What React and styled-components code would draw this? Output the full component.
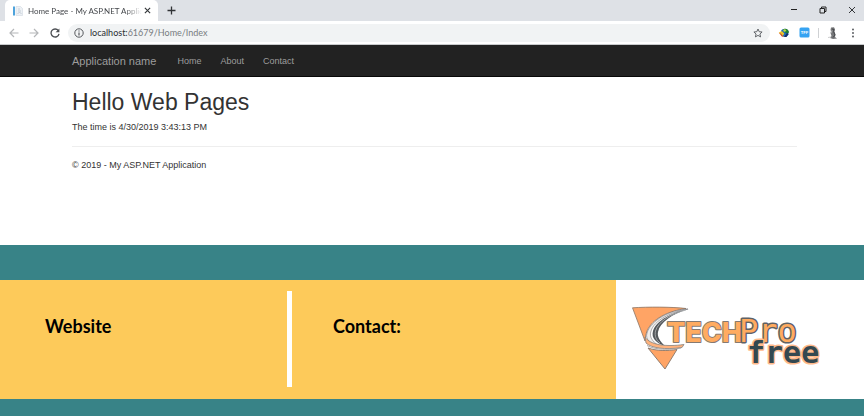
import React from 'react'
import styled, { createGlobalStyle } from 'styled-components';


export default function App() {
  return (
    <Page>
      <GlobalStyle />
      <TabStrip>
        <Tab>
          <PageIcon />
          <TabTitle>Home Page - My ASP.NET Applic</TabTitle>
          <IconButton $size={11} aria-label='Close tab'><CloseIcon size={7} /></IconButton>
        </Tab>
        <IconButton $size={26} aria-label='New tab'><PlusIcon /></IconButton>
        <WindowButtons>
          <IconButton $size={24} aria-label='Minimize'><MinimizeIcon /></IconButton>
          <IconButton $size={24} aria-label='Restore'><RestoreIcon /></IconButton>
          <IconButton $size={24} aria-label='Close'><CloseIcon size={8} thin /></IconButton>
        </WindowButtons>
      </TabStrip>

      <Toolbar>
        <IconButton $size={20} aria-label='Back'><ArrowIcon /></IconButton>
        <IconButton $size={20} aria-label='Forward'><ArrowIcon forward /></IconButton>
        <IconButton $size={22} aria-label='Reload'><ReloadIcon /></IconButton>
        <AddressBar>
          <InfoIcon />
          <Address>
            <span aria-hidden='true'><b>localhost:</b>61679/Home/Index</span>
            <input aria-label='Address' defaultValue='localhost:61679/Home/Index' />
          </Address>
          <IconButton $size={12} aria-label='Bookmark'><StarIcon /></IconButton>
        </AddressBar>
        <Extensions>
          <IconButton $size={12} aria-label='Download manager'><GlobeIcon /></IconButton>
          <IconButton $size={12} aria-label='TFF'><TffIcon /></IconButton>
          <Separator />
          <IconButton $size={12} aria-label='Profile'><ProfileIcon /></IconButton>
          <IconButton $size={12} aria-label='Menu'><MenuIcon /></IconButton>
        </Extensions>
      </Toolbar>

      <Navbar>
        <Brand href='#'>Application name</Brand>
        <NavLink href='#'>Home</NavLink>
        <NavLink href='#'>About</NavLink>
        <NavLink href='#'>Contact</NavLink>
      </Navbar>

      <Content>
        <h1>Hello Web Pages</h1>
        <p>The time is 4/30/2019 3:43:13 PM</p>
        <hr />
        <footer>© 2019 - My ASP.NET Application</footer>
      </Content>

      <Banner>
        <BannerRow>
          <BannerCell>
            <h2>Website</h2>
            <Divider />
          </BannerCell>
          <BannerCell>
            <h2>Contact:</h2>
          </BannerCell>
          <LogoCell><Logo /></LogoCell>
        </BannerRow>
      </Banner>
    </Page>
  )
}

function PageIcon() {
  return (
    <svg width='10' height='10' viewBox='0 0 10 10'>
      <path d='M0 .5h2v9H0z' fill='#4da3dc' />
      <path d='M3 .5h4.500l2 2v7H3z' fill='#edf1f5' stroke='#d2d9e0' strokeWidth='.6' />
      <path d='M5 3h2M5 5h3M4.500 8l2-2 2 2' fill='none' stroke='#b4bfca' strokeWidth='.7' />
    </svg>
  )
}

function CloseIcon({ size, thin }) {
  return (
    <svg width={size} height={size} viewBox='0 0 8 8'>
      <path d='M1 1l6 6M7 1L1 7' stroke='#34373a' strokeWidth={thin ? 1 : 1.3} />
    </svg>
  )
}

function PlusIcon() {
  return (
    <svg width='9' height='9' viewBox='0 0 9 9'>
      <path d='M4.500.5v8M.5 4.500h8' stroke='#303336' strokeWidth='1.300' />
    </svg>
  )
}

function MinimizeIcon() {
  return (
    <svg width='8' height='8' viewBox='0 0 8 8'>
      <path d='M1 3.500h6' stroke='#222' />
    </svg>
  )
}

function RestoreIcon() {
  return (
    <svg width='8' height='8' viewBox='0 0 8 8'>
      <path d='M1 2.500h4.500V7H1zM2.500 2.500V1H7v4.500H5.500' fill='none' stroke='#222' />
    </svg>
  )
}

function ArrowIcon({ forward }) {
  return (
    <svg width='10' height='10' viewBox='0 0 10 10'>
      <path
        d={forward ? 'M.5 5h8M5 1l4 4-4 4' : 'M9.500 5h-8M5 1L1 5l4 4'}
        fill='none'
        stroke='#b4b6b8'
        strokeWidth='1.200'
      />
    </svg>
  )
}

function ReloadIcon() {
  return (
    <svg width='10' height='10' viewBox='0 0 10 10'>
      <path d='M8.300 2.600A4 4 0 1 0 9 5.800' fill='none' stroke='#4b4e52' strokeWidth='1.300' />
      <path d='M9.400.4v3.800H5.600z' fill='#4b4e52' />
    </svg>
  )
}

function InfoIcon() {
  return (
    <svg width='10' height='10' viewBox='0 0 10 10'>
      <circle cx='5' cy='5' r='4.200' fill='none' stroke='#55585c' />
      <path d='M5 4.400v3M5 2.400v1.200' stroke='#55585c' strokeWidth='1.200' />
    </svg>
  )
}

function StarIcon() {
  return (
    <svg width='10' height='10' viewBox='0 0 10 10'>
      <path d='M5 1l1.200 2.700 2.900.3-2.200 2 .7 2.900L5 7.400 2.400 8.900l.7-2.900-2.200-2 2.900-.3z' fill='none' stroke='#55585c' strokeWidth='.9' />
    </svg>
  )
}

function GlobeIcon() {
  return (
    <svg width='12' height='10' viewBox='0 0 12 10'>
      <path d='M3 3C4 1 7 0 9 1.500C11 3 11 6 9 8L6 9L3 7z' fill='#1f6bb8' />
      <path d='M5 1.200C8-.3 10.800 1.500 11 4.500L8.500 5.500L6 3.500z' fill='#1d7d33' />
      <path d='M5 2l2-1 1.500 2-2.500 1z' fill='#b8d84b' />
      <path d='M.8 4.500l3-1.500 2.500 2.500-1.500 2.500z' fill='#ecc52a' />
      <path d='M.8 4.800l2 .7 3 3.500-2-.5z' fill='#d34b27' />
      <path d='M6 9l3-4 1.800 1L8.500 9z' fill='#15306a' />
    </svg>
  )
}

function TffIcon() {
  return (
    <svg width='11' height='11' viewBox='0 0 11 11'>
      <rect x='.5' y='.5' width='10' height='10' rx='1.500' fill='#36a3f2' />
      <text x='5.500' y='7' textAnchor='middle' fontFamily='Liberation Sans, sans-serif' fontWeight='700' fontSize='4' fill='#fff'>TFF</text>
    </svg>
  )
}

function ProfileIcon() {
  return (
    <svg width='12' height='12' viewBox='0 0 12 12'>
      <path d='M4 .5l3-.3 1 2-.5 2.300 1 3-.5 2.500 2 1.500-4 .5-3-1 1.500-2-1-3 .5-2-.5-1z' fill='#77787a' />
      <path d='M5 2l2 .5-.5 2L8 8 6 10.500' fill='none' stroke='#45474a' />
      <path d='M1 10.500l3-.5M5 3.500l-1 2.500' stroke='#bfc0c1' strokeWidth='.8' />
    </svg>
  )
}

function MenuIcon() {
  return (
    <svg width='4' height='10' viewBox='0 0 4 10'>
      <circle cx='2' cy='1.500' r='.9' fill='#4b4e52' />
      <circle cx='2' cy='5' r='.9' fill='#4b4e52' />
      <circle cx='2' cy='8.500' r='.9' fill='#4b4e52' />
    </svg>
  )
}

function Logo() {
  return (
    <svg width='200' height='75' viewBox='0 0 200 75' role='img' aria-label='TECHPro free'>
      {/* shield */}
      <path d='M2.500 7.800C18 6.800 42 6.800 56 8.500C38 11 22 19 17 31C16 34 15 38 15 41Z' fill='#ffa465' stroke='#8a7565' strokeWidth='.8' />
      <path d='M18 48C27 51 37 51 47 49.500L35 69Z' fill='#ffa465' stroke='#85756a' strokeWidth='.9' />
      {/* road */}
      <path d='M58 9C40 10 21 20 17 33C15 39 20 44 29 46C22 41 19 37 21 31C24 21 40 12 58 9Z' fill='#efedeb' stroke='#77757a' strokeWidth='.6' />
      <path d='M59 9C42 12 26 21 23 31C21 38 26 43 35 46C30 41 27 37 28 32C30 22 42 14 59 9Z' fill='#54585c' />
      <path d='M56 10C40 14 28 22 25.500 31C24.500 36 26 40 30 43' fill='none' stroke='#b5b7b9' strokeWidth='.8' />
      {/* band under the shield */}
      <path d='M15 37C20 45 36 47 54 44.500L52 47.500C35 50 21 48 16 43Z' fill='#ffb27c' stroke='#85817d' strokeWidth='.8' />
      <path d='M17 45.500C25 50 39 50 51 48' fill='none' stroke='#9a9693' strokeWidth='.8' />

      <LogoWord x='37' y='42' $family='Inter' $size={27} $fill='#ffab60' $stroke='#857a72' $weight={800}>TECH</LogoWord>
      <LogoWord x='109' y='42' $family='DejaVu Sans Mono' $size={32} $fill='#ffab60' $stroke='#5f6266' $weight={400} $line={3}>Pro</LogoWord>
      <LogoWord x='117' y='63' $family='DejaVu Sans Mono' $size={30} $fill='#344850' $stroke='#ffb98a' $line={3}>free</LogoWord>
    </svg>
  )
}

const GlobalStyle = createGlobalStyle`
  *{
    box-sizing: border-box;
  }
  body{
    margin: 0;
    background: #388387;
    font-family: 'Liberation Sans', Arial, sans-serif;
  }
`

const Page = styled.div`
  display: flex;
  flex-direction: column;
  min-height: 100vh;
`

const IconButton = styled.button`
  display: flex;
  align-items: center;
  justify-content: center;
  flex: none;
  width: ${({ $size }) => $size}px;
  height: 20px;
  padding: 0;
  border: 0;
  background: none;
`

const TabStrip = styled.header`
  display: flex;
  height: 21px;
  padding-left: 5px;
  background: #dee1e6;
`

const Tab = styled.div`
  display: flex;
  align-items: center;
  width: 153px;
  padding: 0 5px 0 8px;
  border-radius: 5px 5px 0 0;
  background: #fff;
`

const TabTitle = styled.span`
  flex: 1;
  min-width: 0;
  margin-left: 5px;
  overflow: hidden;
  white-space: nowrap;
  font: 8px/20px Lato, sans-serif;
  color: #45484c;
  mask-image: linear-gradient(to right, #000 85%, transparent);
`

const WindowButtons = styled.div`
  display: flex;
  gap: 5px;
  margin-left: auto;
`

const Toolbar = styled.div`
  display: flex;
  align-items: center;
  height: 24px;
  padding: 0 5px 0 4px;
  border-bottom: 1px solid #c9cbcd;
  background: #fff;
`

const AddressBar = styled.div`
  display: flex;
  align-items: center;
  flex: 1;
  height: 18px;
  margin-left: 2px;
  padding: 0 6px;
  border-radius: 9px;
  background: #f1f3f4;
`

/* the input keeps its text clear, the label above shows the host darker */
const Address = styled.div`
  position: relative;
  flex: 1;
  height: 18px;
  margin-left: 6px;
  font: 9px/18px Lato, sans-serif;
  color: #777b80;
  b{
    font-weight: 400;
    color: #292c30;
  }
  input{
    position: absolute;
    inset: 0;
    width: 100%;
    padding: 0;
    border: 0;
    outline: 0;
    background: none;
    font: inherit;
    color: transparent;
    caret-color: #292c30;
  }
`

const Extensions = styled.div`
  display: flex;
  align-items: center;
  gap: 8px;
  margin-left: 8px;
`

const Separator = styled.span`
  width: 1px;
  height: 10px;
  background: #cfd1d4;
`

const Navbar = styled.nav`
  display: flex;
  align-items: center;
  gap: 19px;
  height: 32px;
  padding: 0 72px;
  border-bottom: 1px solid #080808;
  background: #222;
`

const NavLink = styled.a`
  font-size: 9px;
  line-height: 32px;
  color: #9d9d9d;
  text-decoration: none;
`

const Brand = styled(NavLink)`
  margin-right: 2px;
  font-size: 11px;
`

const Content = styled.main`
  min-height: 168px;
  padding: 12px 67px 0 72px;
  background: #fff;
  font-size: 9px;
  line-height: 13px;
  color: #333;
  h1{
    margin: 0 0 6px;
    font-size: 23px;
    font-weight: 400;
    line-height: 26px;
  }
  p{
    margin: 0;
  }
  hr{
    margin: 12px 0;
    border: 0;
    border-top: 1px solid #eee;
  }
`

const Banner = styled.section`
  padding: 35px 0 18px;
  background: #388387;
`

const BannerRow = styled.div`
  display: grid;
  grid-template-columns: 288fr 328fr 248fr;
  height: 118px;
`

const BannerCell = styled.div`
  position: relative;
  padding: 34px 45px;
  background: #fdca5a;
  h2{
    margin: 0;
    font: 700 18px/24px Lato, sans-serif;
    color: #000;
  }
`

const Divider = styled.span`
  position: absolute;
  z-index: 1;
  top: 11px;
  right: -4px;
  bottom: 12px;
  width: 5px;
  background: #fff;
`

const LogoCell = styled.div`
  padding: 20px 14px;
  background: #fff;
`

const LogoWord = styled.text`
  font-family: '${({ $family }) => $family}', sans-serif;
  font-size: ${({ $size }) => $size}px;
  font-weight: ${({ $weight = 700 }) => $weight};
  fill: ${({ $fill }) => $fill};
  stroke: ${({ $stroke }) => $stroke};
  stroke-width: ${({ $line = 2 }) => $line}px;
  stroke-linejoin: round;
  paint-order: stroke;
`
